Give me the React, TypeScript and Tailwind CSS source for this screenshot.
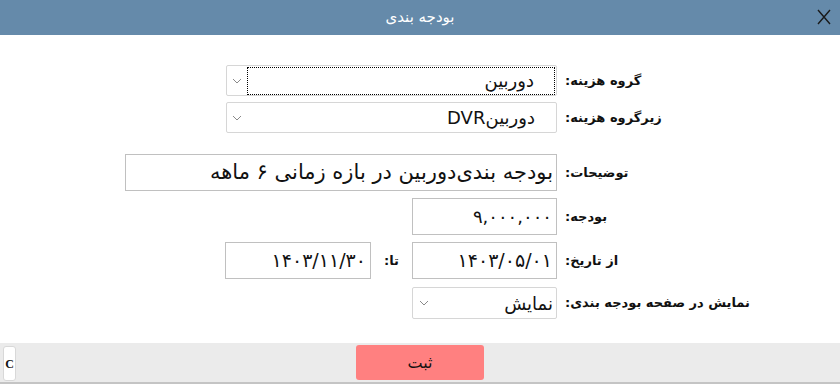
import React from "react";

const font = { fontFamily: '"DejaVu Sans", "Noto Sans", sans-serif' };

function Chevron() {
  return (
    <svg width="10" height="6" viewBox="0 0 10 6" className="shrink-0">
      <path d="M1 1 L5 5 L9 1" fill="none" stroke="#8a8a8a" strokeWidth="1" />
    </svg>
  );
}

function Label({ children }: { children: React.ReactNode }) {
  return (
    <div dir="rtl" className="text-left text-[13px] font-bold text-[#111] whitespace-nowrap">
      {children}
    </div>
  );
}

export default function App() {
  return (
    <div className="w-[840px] h-[384px] bg-white flex flex-col overflow-hidden" style={font}>
      <div className="h-[35px] bg-[#658aaa] flex items-center justify-center relative shrink-0">
        <span dir="rtl" className="text-white text-[15px]">بودجه بندی</span>
        <svg className="absolute right-[9px] top-[9px]" width="14" height="16" viewBox="0 0 14 16">
          <path d="M1 1 L13 15 M13 1 L1 15" stroke="#1a1a1a" strokeWidth="1.4" />
        </svg>
      </div>

      <div className="flex-1 grid grid-cols-[557px_1fr] gap-x-[8px] content-start pt-[30px]">
        {/* row 1 */}
        <div className="flex justify-end">
          <div className="w-[331px] h-[31px] border border-[#d6d6d6] rounded-[2px] flex items-center pl-[5px] pr-[1px]">
            <Chevron />
            <div dir="rtl" className="ml-[5px] flex-1 h-[28px] border border-dotted border-[#000] flex items-center pr-[20px] text-[18px] text-[#111]">
              دوربین
            </div>
          </div>
        </div>
        <div className="flex items-center"><Label>گروه هزینه:</Label></div>

        {/* row 2 */}
        <div className="flex justify-end mt-[6px]">
          <div className="w-[331px] h-[31px] border border-[#d6d6d6] rounded-[2px] flex items-center pl-[5px] pr-[1px]">
            <Chevron />
            <div dir="rtl" className="ml-[5px] flex-1 h-[28px] flex items-center pr-[20px] text-[18px] text-[#111]">
              دوربینDVR
            </div>
          </div>
        </div>
        <div className="flex items-center mt-[6px]"><Label>زیرگروه هزینه:</Label></div>

        {/* row 3 */}
        <div className="flex justify-end mt-[21px]">
          <div dir="rtl" className="w-[432px] h-[37px] border border-[#c0c0c0] flex items-center pr-[3px] text-[21px] text-[#111] whitespace-nowrap">
            بودجه بندی‌دوربین در بازه زمانی ۶ ماهه
          </div>
        </div>
        <div className="flex items-center mt-[21px]"><Label>توضیحات:</Label></div>

        {/* row 4 */}
        <div className="flex justify-end mt-[7px]">
          <div dir="rtl" className="w-[145px] h-[37px] border border-[#c0c0c0] flex items-center pr-[4px] text-[18px] text-[#111]">
            ۹,۰۰۰,۰۰۰
          </div>
        </div>
        <div className="flex items-center mt-[7px]"><Label>بودجه:</Label></div>

        {/* row 5 */}
        <div className="flex justify-end items-center mt-[7px]">
          <div dir="rtl" className="w-[146px] h-[37px] border border-[#c0c0c0] flex items-center pr-[4px] text-[19px] text-[#111]">
            ۱۴۰۳/۱۱/۳۰
          </div>
          <div className="w-[41px] flex justify-center">
            <Label>تا:</Label>
          </div>
          <div dir="rtl" className="w-[145px] h-[37px] border border-[#c0c0c0] flex items-center pr-[4px] text-[19px] text-[#111]">
            ۱۴۰۳/۰۵/۰۱
          </div>
        </div>
        <div className="flex items-center mt-[7px]"><Label>از تاریخ:</Label></div>

        {/* row 6 */}
        <div className="flex justify-end mt-[8px]">
          <div className="w-[145px] h-[32px] border border-[#d6d6d6] rounded-[2px] flex items-center pl-[6px]">
            <Chevron />
            <div dir="rtl" className="flex-1 flex items-center pr-[3px] text-[18px] text-[#111]">
              نمایش
            </div>
          </div>
        </div>
        <div className="flex items-center mt-[8px]"><Label>نمایش در صفحه بودجه بندی:</Label></div>
      </div>

      <div className="h-[41px] bg-[#ebebeb] border-b-[2px] border-[#c4c4c4] flex items-center relative shrink-0">
        <div className="absolute left-[3px] top-[3px] w-[13px] h-[35px] bg-white border border-[#d8d8d8] rounded-[3px] flex items-center justify-center text-[12px] leading-none font-bold text-[#111]" style={{ fontFamily: '"Liberation Serif", serif' }}>
          <span>C</span>
        </div>
        <div className="mx-auto w-[128px] h-[35px] bg-[#ff8080] rounded-[3px] flex items-center justify-center text-[16px] text-[#111]" dir="rtl">
          ثبت
        </div>
      </div>
    </div>
  );
}
